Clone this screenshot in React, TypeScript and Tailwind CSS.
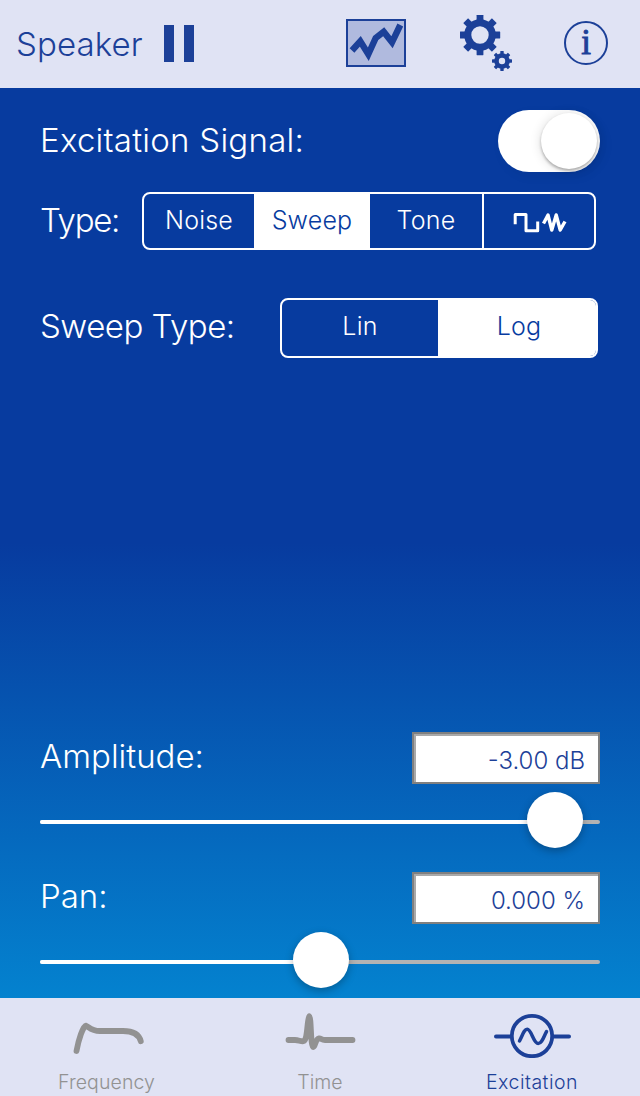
import React, { useState } from 'react';
import clsx from 'clsx';

const SpectrumIcon = () => (
  <svg width="60" height="48" viewBox="0 0 60 48" fill="none">
    <rect x="1" y="1" width="58" height="46" fill="#b0bade" stroke="#1c4098" strokeWidth="2" />
    <path d="M6 31.5 14.3 22.3 22.3 35.3 29.7 19 37.7 12.8 46 23.3 54.3 6" stroke="#1c4098" strokeWidth="6.4" />
  </svg>
);

interface GearProps {
  cx: number;
  cy: number;
  r: number;
  body: number;
  hole: number;
  tooth: number;
}

const Gear: React.FC<GearProps> = ({ cx, cy, r, body, hole, tooth }) => (
  <g transform={`translate(${cx} ${cy})`}>
    <circle r={(body + hole) / 2} fill="none" stroke="#1c4098" strokeWidth={body - hole} />
    {[0, 45, 90, 135, 180, 225, 270, 315].map((angle) => (
      <rect
        key={angle}
        x={-tooth / 2}
        y={-r}
        width={tooth}
        height={r - body + 1.5}
        rx="0.4"
        fill="#1c4098"
        transform={`rotate(${angle})`}
      />
    ))}
  </g>
);

const SettingsIcon = () => (
  <svg width="52" height="56" viewBox="0 0 52 56">
    <Gear cx={20} cy={20} r={20.2} body={15.8} hole={8.7} tooth={6.8} />
    <Gear cx={42} cy={46} r={10} body={7.8} hole={3.2} tooth={3.4} />
  </svg>
);

const WaveformIcon = () => (
  <svg width="54" height="22" viewBox="0 0 54 22" fill="none" stroke="currentColor" strokeWidth="3" strokeLinejoin="round">
    <path d="M2.2 12.3V2.5H13V18.7H24.7V9.5" />
    <path d="M30.5 11.5 35 3 38.8 18 43.2 3 47.2 18 52 9.5" strokeWidth="3.4" />
  </svg>
);

const FrequencyIcon = () => (
  <svg width="72" height="44" viewBox="0 0 72 44" fill="none" stroke="currentColor" strokeWidth="5.8" strokeLinecap="round" className="overflow-visible">
    <path d="M5.5 39C7.5 28 12 14 15 13.7C17.5 14.5 20 19 29 19H52C62.500 19 68 22.500 69.800 29.300" />
  </svg>
);

const TimeIcon = () => (
  <svg width="72" height="44" viewBox="0 0 72 44" fill="none" stroke="currentColor" strokeWidth="5.8" strokeLinecap="round" strokeLinejoin="round">
    <path d="M4.5 28H11C15 28 16 29.5 19.5 29.2C23.7 29 23 7 25.3 4.3C27.3 5 26.5 35 29.2 35C31.5 35 31 27 35 26.3C37 26 37.5 28 41 28H68.5" />
  </svg>
);

const ExcitationIcon = () => (
  <svg width="78" height="46" viewBox="0 0 78 46" fill="none" stroke="currentColor" strokeLinecap="round">
    <circle cx="39" cy="24" r="20.2" strokeWidth="3.8" />
    <path d="M3 24.4H17.5M60.500 24.4H76" strokeWidth="4" />
    <path d="M26.5 29C29.5 23.5 31 17.3 34.2 17.3C38.5 17.3 40.5 31.5 45.2 31.5C49 31.5 50.5 25 53.5 19.6" strokeWidth="3.5" />
  </svg>
);

interface SliderRowProps {
  label: string;
  value: string;
  position: number;
}

const SliderRow: React.FC<SliderRowProps> = ({ label, value, position }) => (
  <div className="h-[140px]">
    <div className="flex h-[52px] items-center justify-between">
      <span className="pb-1 text-[33px] leading-[48px]">{label}</span>
      <div className="h-[52px] w-[188px] border-2 border-[#808080]">
        <div className="h-full border-l-2 border-t-2 border-[#a9a9a9] bg-white pr-[13px] pt-[3px] text-right text-2xl leading-[44px] text-[#1c4098]">
          {value}
        </div>
      </div>
    </div>
    <div className="relative mt-9 h-1 rounded-full bg-[#b3b3b3]">
      <div className="h-1 rounded-l-full bg-white" style={{ width: position }} />
      <div
        className="absolute -top-7 size-14 -translate-x-1/2 rounded-full bg-white shadow-[0_3px_8px_rgba(0,0,0,0.28)]"
        style={{ left: position }}
      />
    </div>
  </div>
);

const signalTypes = [
  { id: 'Noise', width: 'w-[110px]' },
  { id: 'Sweep', width: 'w-[116px]' },
  { id: 'Tone', width: 'w-[112px]' },
  { id: 'Waveform', width: 'w-[112px] border-l-2 border-white' }
];

const sweepTypes = [
  { id: 'Lin', width: 'w-[156px]' },
  { id: 'Log', width: 'w-[158px] pl-1' }
];

const tabs = [
  { id: 'Frequency', icon: <FrequencyIcon />, tracking: 'tracking-[0.1px]' },
  { id: 'Time', icon: <TimeIcon />, tracking: 'tracking-normal' },
  { id: 'Excitation', icon: <ExcitationIcon />, tracking: 'tracking-[0.5px]' }
];

const App: React.FC = () => {
  const [enabled, setEnabled] = useState(true);
  const [signalType, setSignalType] = useState('Sweep');
  const [sweepType, setSweepType] = useState('Log');
  const [tab, setTab] = useState('Excitation');

  return (
    <div className="flex h-[1096px] w-[640px] flex-col overflow-hidden bg-[#e0e3f4] font-['Inter','Liberation_Sans',sans-serif] font-light">
      {/* Top bar */}
      <header className="flex h-[88px] shrink-0 text-[#1c4098]">
        <span className="ml-4 w-[148px] text-[33px] leading-[88px] tracking-[0.1px]">Speaker</span>
        <div className="mt-[25px] flex h-[37px] w-[30px] justify-between">
          <div className="w-2.5 bg-[#1c4098]" />
          <div className="w-2.5 bg-[#1c4098]" />
        </div>
        <div className="ml-[152px] mt-[19px]">
          <SpectrumIcon />
        </div>
        <div className="ml-[54px] mt-[15px]">
          <SettingsIcon />
        </div>
        <div className="ml-[52px] mt-[21px] flex size-11 justify-center rounded-full border-2 border-[#1c4098] font-['Liberation_Serif',serif] text-[35px] leading-[40px] font-normal [-webkit-text-stroke:0.9px_#1c4098]">
          i
        </div>
      </header>

      <main className="flex h-[910px] shrink-0 flex-col bg-linear-to-b/srgb from-[#073b9f] from-50% to-[#0482cf] px-10 pt-[22px] text-white">
        <div className="flex h-[62px] items-center justify-between">
          <span className="text-[33px] tracking-[0.25px]">Excitation Signal:</span>
          <button
            onClick={() => setEnabled(!enabled)}
            className={clsx(
              'flex h-[62px] w-[102px] items-center rounded-full bg-white px-[3px] shadow-[4px_4px_12px_rgba(0,0,0,0.06)]',
              enabled ? 'justify-end' : 'justify-start'
            )}
          >
            <span className="size-14 rounded-full bg-white shadow-[0_2px_3px_rgba(0,0,0,0.28),0_1px_12px_rgba(0,0,0,0.14)]" />
          </button>
        </div>

        {/* Signal type */}
        <div className="mt-5 flex h-[58px] items-center">
          <span className="w-[102px] text-[33px] tracking-[-1.3px]">Type:</span>
          <div className="flex h-[58px] w-[454px] overflow-hidden rounded-lg border-2 border-white">
            {signalTypes.map(({ id, width }) => (
              <button
                key={id}
                onClick={() => setSignalType(id)}
                className={clsx(
                  'flex h-full shrink-0 items-center justify-center text-[25px] tracking-[0.2px]',
                  width,
                  signalType === id ? 'bg-white text-[#073b9f]' : 'text-white'
                )}
              >
                {id === 'Waveform' ? <span className="pl-0.5 pt-1"><WaveformIcon /></span> : id}
              </button>
            ))}
          </div>
        </div>

        {/* Sweep scale */}
        <div className="mt-12 flex h-[60px] items-center">
          <span className="w-[240px] pb-0.5 text-[33px] tracking-[-0.5px]">Sweep Type:</span>
          <div className="flex h-[60px] w-[318px] overflow-hidden rounded-lg border-2 border-white">
            {sweepTypes.map(({ id, width }) => (
              <button
                key={id}
                onClick={() => setSweepType(id)}
                className={clsx(
                  'h-full shrink-0 pb-0.5 text-[25px] tracking-[0.2px]',
                  width,
                  sweepType === id ? 'bg-white text-[#073b9f]' : 'text-white'
                )}
              >
                {id}
              </button>
            ))}
          </div>
        </div>

        <div className="mt-[374px]">
          <SliderRow label="Amplitude:" value="-3.00 dB" position={515} />
          <SliderRow label="Pan:" value="0.000 %" position={281} />
        </div>
      </main>

      {/* Bottom tabs */}
      <nav className="grid h-[98px] shrink-0 grid-cols-[213px_214px_210px]">
        {tabs.map(({ id, icon, tracking }) => (
          <button
            key={id}
            onClick={() => setTab(id)}
            className={clsx(
              'flex flex-col items-center pt-3.5',
              tab === id ? 'text-[#1c4098]' : 'text-[#929292]'
            )}
          >
            <span className="flex h-[58px]">{icon}</span>
            <span className={clsx('text-[19.5px] leading-6', tracking)}>{id}</span>
          </button>
        ))}
      </nav>
    </div>
  );
};

export default App;
